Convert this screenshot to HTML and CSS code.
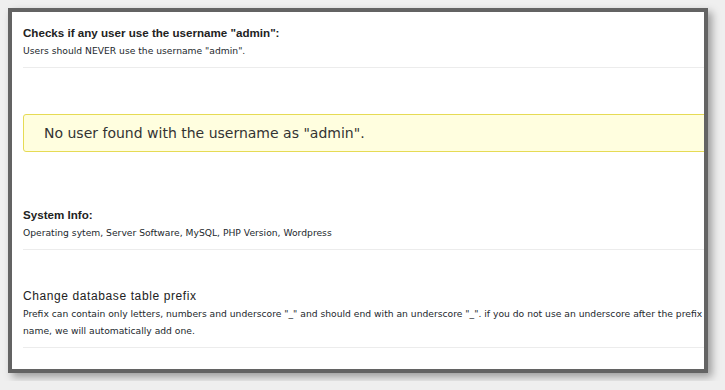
FILE: index.html
```html
<!DOCTYPE html>
<html lang="en">
<head>
    <meta charset="UTF-8">
    <meta name="viewport" content="width=device-width, initial-scale=1.0">
    <title>Security Checks</title>
    <link rel="stylesheet" href="styles.css">
</head>
<body>
    <div class="frame">
        <div class="content">
            <div class="section">
                <h3>Checks if any user use the username "admin":</h3>
                <p>Users should NEVER use the username "admin".</p>
            </div>

            <div class="notice">No user found with the username as "admin".</div>

            <div class="section">
                <h3>System Info:</h3>
                <p>Operating sytem, Server Software, MySQL, PHP Version, Wordpress</p>
            </div>

            <div class="section">
                <h3 class="light">Change database table prefix</h3>
                <p>Prefix can contain only letters, numbers and underscore "_" and should end with an underscore "_". if you do not use an underscore after the prefix name, we will automatically add one.</p>
            </div>
        </div>
    </div>
</body>
</html>
```

FILE: styles.css
```css
body {
    margin: 0;
    padding: 8px;
    background-color: #efefef;
    font-family: 'Liberation Sans', Arial, sans-serif;
    color: #222;
}
.frame {
    width: 692px;
    height: 357px;
    border: 4px solid #636363;
    background: #fff;
    overflow: hidden;
    box-shadow: 4px 4px 8px rgba(0,0,0,0.35);
}
.content {
    width: 689px;
    padding-left: 11px;
    display: flex;
    flex-direction: column;
}
.section {
    margin-top: 25px;
    padding: 14px 0 8px;
    border-bottom: 1px solid #ececec;
}
.section:first-child {
    margin-top: 0;
}
.section h3 {
    margin: 0;
    font-size: 11.6px;
    line-height: 14px;
    font-weight: bold;
    color: #222;
}
.section h3.light {
    font-weight: normal;
    font-size: 12px;
    letter-spacing: 0.6px;
}
.section p {
    margin: 2px 0 0;
    font-family: 'DejaVu Sans', Verdana, sans-serif;
    font-size: 9.2px;
    line-height: 17px;
    color: #23282d;
}
.notice {
    margin: 46px 0 17px;
    height: 36px;
    line-height: 36px;
    padding-left: 20px;
    border: 1px solid #e6db55;
    border-radius: 3px;
    background-color: #fffedf;
    font-family: 'DejaVu Sans', Verdana, sans-serif;
    font-size: 14px;
    color: #333;
}
```
